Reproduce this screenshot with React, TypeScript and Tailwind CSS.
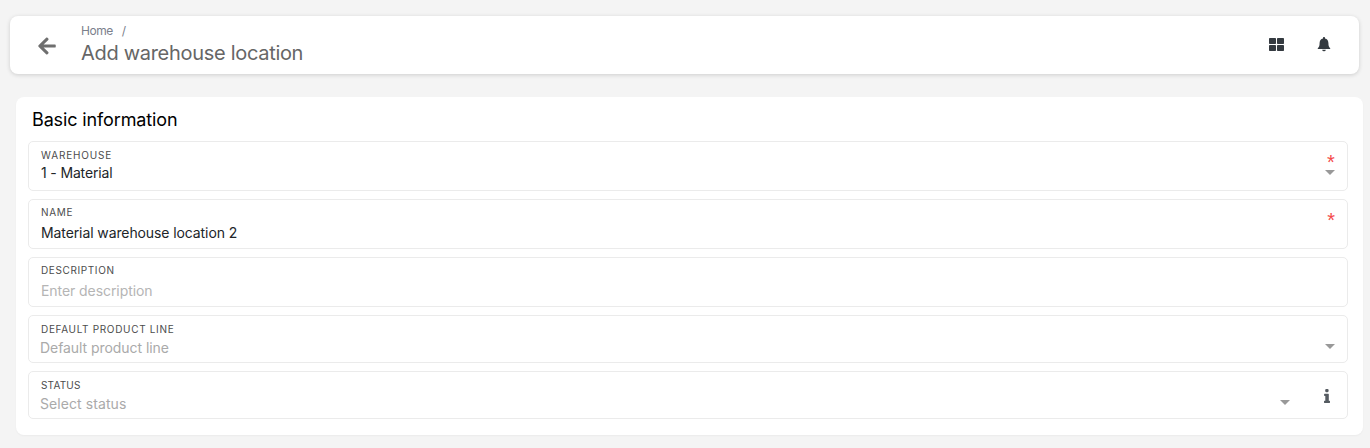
import { FaArrowLeft } from "react-icons/fa";

function Caret() {
  return (
    <svg width="10" height="5" viewBox="0 0 10 5" className="block shrink-0 fill-[#999999]">
      <path d="M0 0h10L5 5z" />
    </svg>
  );
}

function GridIcon() {
  return (
    <svg width="15" height="13" viewBox="0 0 15 13" className="block shrink-0" fill="currentColor">
      <rect x="0" y="0" width="7" height="6" rx="0.7" />
      <rect x="8" y="0" width="7" height="6" rx="0.7" />
      <rect x="0" y="7" width="7" height="6" rx="0.7" />
      <rect x="8" y="7" width="7" height="6" rx="0.7" />
    </svg>
  );
}

function BellIcon() {
  return (
    <svg width="14" height="15" viewBox="0 0 14 15" className="block shrink-0" fill="currentColor">
      <path d="M7 0c.6 0 1 .4 1 1v.4C10.200 1.900 11.400 3.600 11.400 6c0 3 .6 4 1.600 5 .5.500.300 1-.3 1H1.300c-.6 0-.8-.5-.3-1C2 10 2.600 9 2.600 6c0-2.400 1.200-4.100 3.400-4.600V1c0-.6.4-1 1-1z" />
      <path d="M5.200 12.800h3.600a1.800 1.500 0 0 1-3.600 0z" />
    </svg>
  );
}

function InfoIcon() {
  return (
    <svg width="6" height="14" viewBox="0 0 6 14" className="block shrink-0" fill="currentColor">
      <rect x="1.200" y="0" width="3.400" height="3.200" rx="1.100" />
      <path d="M.6 4.800h3.700c.3 0 .5.200.5.500v6.500h.7c.3 0 .5.200.5.500v1.200c0 .3-.2.500-.5.500h-5c-.3 0-.5-.2-.5-.5v-1.200c0-.3.2-.5.5-.5h.8V7H.6c-.3 0-.5-.2-.5-.5V5.300c0-.3.200-.5.500-.5z" />
    </svg>
  );
}

type FieldProps = {
  label: string;
  labelClass: string;
  value: string;
  valueClass: string;
  boxClass: string;
  children?: React.ReactNode;
};

function Field({ label, labelClass, value, valueClass, boxClass, children }: FieldProps) {
  return (
    <div className={`flex justify-between rounded-[5px] border border-[#ebebeb] pl-3 ${boxClass}`}>
      <div className="flex flex-col items-start whitespace-nowrap">
        <span className={`text-[10px] leading-3 text-[#4c4c4c] ${labelClass}`}>{label}</span>
        <span className={`text-sm leading-5 ${valueClass}`}>{value}</span>
      </div>
      {children}
    </div>
  );
}

function Required() {
  return (
    <span className="block font-['Liberation_Sans',sans-serif] text-[20px] leading-4 text-[#f44a4a]">*</span>
  );
}

export default function App() {
  return (
    <div className="h-[448px] overflow-hidden bg-[#f4f4f4] pt-4 pr-[7px] pl-[10px] font-['Inter',sans-serif]">
      <header className="mr-1 flex h-[58px] items-center justify-between rounded-lg bg-white pr-[28px] pl-[27px] shadow-[0_1px_4px_rgba(0,0,0,0.16)]">
        <div className="flex h-full">
          <FaArrowLeft className="mt-[19.5px] size-[20px] text-[#6f6f6f]" />
          <div className="ml-6 flex flex-col items-start pt-[7px] whitespace-nowrap">
            <div className="flex gap-[9px] text-xs leading-4 text-[#7b808c]">
              <span className="tracking-[-0.45px]">Home</span>
              <span>/</span>
            </div>
            <h1 className="text-xl leading-7 tracking-[-0.3px] text-[#666666]">Add warehouse location</h1>
          </div>
        </div>
        <div className="flex h-full items-start gap-[33px] text-[#343a40]">
          <div className="pt-[22px]">
            <GridIcon />
          </div>
          <div className="pt-[21px]">
            <BellIcon />
          </div>
        </div>
      </header>

      <main className="mt-[23px] ml-[6px] h-[338px] rounded-lg bg-white pt-[11px] pr-[15px] pl-3 shadow-[0_1px_2px_rgba(0,0,0,0.04)]">
        <h2 className="h-[33px] pl-1 text-lg leading-6 tracking-[-0.13px] text-black">Basic information</h2>
        <div className="flex flex-col gap-2">
          <Field
            label="WAREHOUSE"
            labelClass="mt-[7px] tracking-[0.85px]"
            value="1 - Material"
            valueClass="mt-[2px] tracking-[-0.15px] text-[#212529]"
            boxClass="h-[50px]"
          >
            <div className="flex flex-col items-center pt-[12px] pr-[12px]">
              <div className="-mr-0.5 h-4">
                <Required />
              </div>
              <Caret />
            </div>
          </Field>
          <Field
            label="NAME"
            labelClass="mt-[6px] tracking-[0.7px]"
            value="Material warehouse location 2"
            valueClass="mt-[5px] tracking-[-0.1px] text-[#212529]"
            boxClass="h-[50px]"
          >
            <div className="flex pt-[12px] pr-[12px]">
              <Required />
            </div>
          </Field>
          <Field
            label="DESCRIPTION"
            labelClass="mt-[6px] tracking-[0.62px]"
            value="Enter description"
            valueClass="mt-[5px] tracking-[-0.07px] text-[#b5b5b5]"
            boxClass="h-[50px]"
          />
          <Field
            label="DEFAULT PRODUCT LINE"
            labelClass="mt-[7px] tracking-[0.67px]"
            value="Default product line"
            valueClass="-ml-px mt-[3px] tracking-[-0.06px] text-[#aaaaaa]"
            boxClass="h-[48px]"
          >
            <div className="pt-7 pr-[12px]">
              <Caret />
            </div>
          </Field>
          <Field
            label="STATUS"
            labelClass="mt-[7px] tracking-[0.2px]"
            value="Select status"
            valueClass="-ml-px mt-[3px] tracking-[0.08px] text-[#aaaaaa]"
            boxClass="h-[48px]"
          >
            <div className="flex pr-[17px]">
              <div className="pt-7">
                <Caret />
              </div>
              <div className="pt-[17px] pl-[34px] text-[#555b61]">
                <InfoIcon />
              </div>
            </div>
          </Field>
        </div>
      </main>
    </div>
  );
}
